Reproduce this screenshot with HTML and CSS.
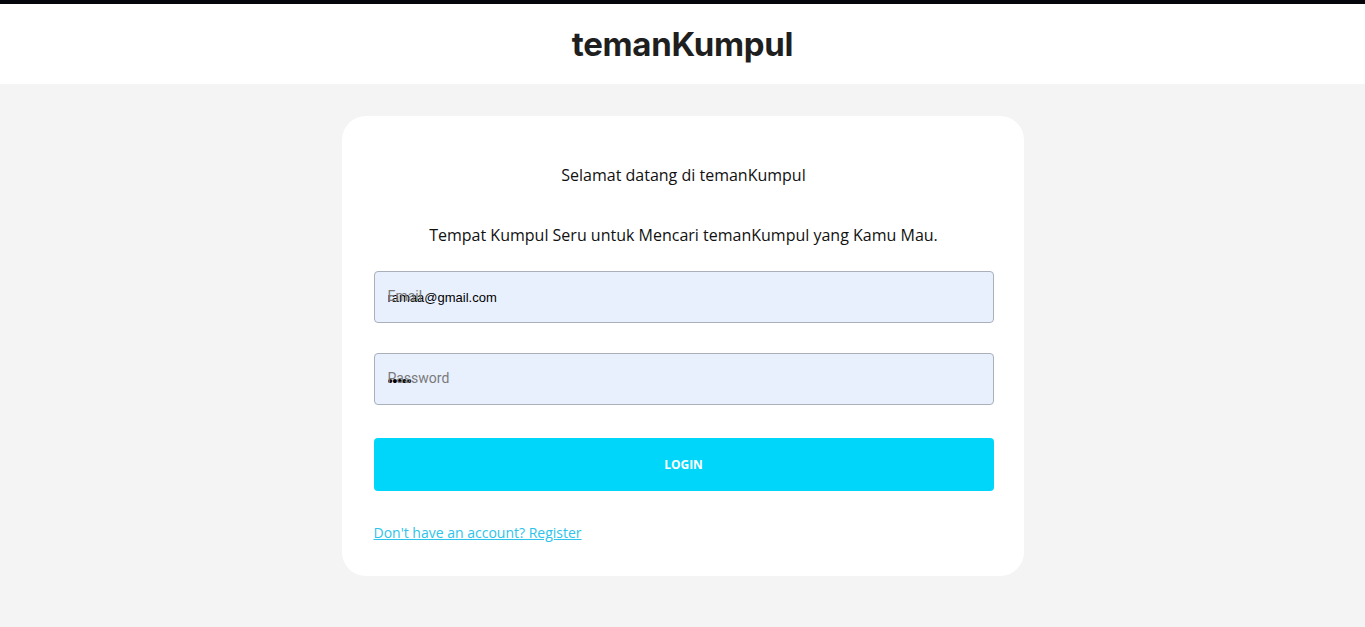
FILE: index.html
```html
<!DOCTYPE html>
<html lang="id">
<head>
<meta charset="utf-8">
<title>temanKumpul</title>
<link rel="stylesheet" href="styles.css">
</head>
<body>
<div class="topstrip"></div>
<header class="header">
  <h1 class="brand">temanKumpul</h1>
</header>
<main class="main">
  <section class="card">
    <p class="welcome">Selamat datang di temanKumpul</p>
    <p class="tagline">Tempat Kumpul Seru untuk Mencari temanKumpul yang Kamu Mau.</p>
    <form class="form">
      <div class="field">
        <span class="label">Email</span>
        <input class="input" type="text" value="ramaa@gmail.com">
      </div>
      <div class="field">
        <span class="label">Password</span>
        <input class="input pw" type="password" value="12345">
      </div>
      <button class="btn" type="button">LOGIN</button>
    </form>
    <a class="link" href="#">Don't have an account? Register</a>
  </section>
</main>
</body>
</html>
```
FILE: styles.css
```css
* { box-sizing: border-box; }
html, body { margin: 0; padding: 0; }
body {
  background: #f4f4f4;
  font-family: "Open Sans", "Liberation Sans", sans-serif;
  color: #222;
  height: 627px;
  overflow: hidden;
}
.topstrip {
  height: 4px;
  background: #05060c;
}
.header {
  height: 80px;
  background: #fff;
  display: flex;
  align-items: center;
  justify-content: center;
}
.brand {
  margin: 0;
  font-family: Inter, "Liberation Sans", sans-serif;
  font-weight: 700;
  font-size: 33px;
  color: #1f1f1f;
  letter-spacing: -0.3px;
}
.main {
  padding-top: 32px;
  display: flex;
  justify-content: center;
}
.card {
  width: 682px;
  background: #fff;
  border-radius: 24px;
  padding: 48px 30px 33px 32px;
}
.welcome, .tagline {
  margin: 0;
  text-align: center;
  font-size: 16px;
  line-height: 22px;
  font-weight: 500;
  color: #111;
}
.tagline {
  margin-top: 38px;
}
.form {
  margin-top: 25px;
  display: flex;
  flex-direction: column;
  gap: 30px;
}
.field {
  position: relative;
}
.label {
  position: absolute;
  left: 14px;
  top: 17px;
  font-family: Roboto, "Liberation Sans", sans-serif;
  font-size: 14px;
  color: #7a7a7a;
  pointer-events: none;
}
.input {
  display: block;
  width: 100%;
  height: 52px;
  padding: 0 13px;
  border: 1px solid #a9b0bc;
  border-radius: 4px;
  background: #e8f0fe;
  font-family: "Liberation Sans", Arial, sans-serif;
  font-size: 13px;
  color: #000;
  outline: none;
}
.pw { font-size: 15px; padding-top: 3px; letter-spacing: -0.5px; }
.btn {
  margin-top: 3px;
  height: 53px;
  border: none;
  border-radius: 4px;
  background: #00d6fa;
  color: #fff;
  font-family: "Open Sans", "Liberation Sans", sans-serif;
  font-weight: 700;
  font-size: 12px;
}
.link {
  display: inline-block;
  margin-top: 32px;
  font-size: 14px;
  line-height: 20px;
  color: #2ec3ea;
}
```
